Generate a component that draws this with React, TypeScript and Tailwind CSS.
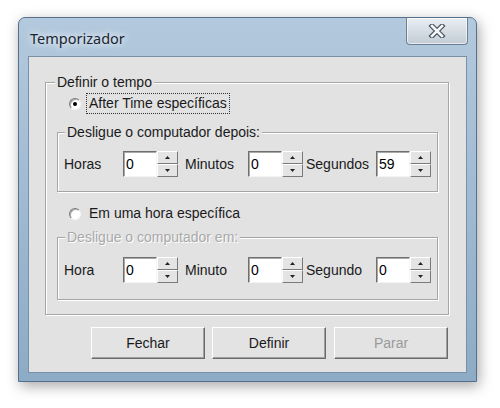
import React from "react";

const font = { fontFamily: '"Liberation Sans", Arial, sans-serif' };

function Spinner({ value }: { value: string }) {
  return (
    <div className="flex h-[26px] w-[55px]">
      <div className="flex h-full w-[34px] items-center border border-t-[#6f6f6f] border-l-[#6f6f6f] border-b-[#f4f4f4] border-r-[#f4f4f4] bg-white pl-[2px] text-[14px] leading-none text-black shadow-[inset_1px_1px_0_#a9a9a9]">
        {value}
      </div>
      <div className="flex h-full w-[21px] flex-col">
        <div className="flex flex-1 items-center justify-center border border-t-white border-l-white border-b-[#7a7a7a] border-r-[#7a7a7a] bg-[#e4e4e4]">
          <svg width="5" height="3" viewBox="0 0 5 3">
            <path d="M2.5 0 L5 3 L0 3 Z" fill="#222" />
          </svg>
        </div>
        <div className="flex flex-1 items-center justify-center border border-t-white border-l-white border-b-[#7a7a7a] border-r-[#7a7a7a] bg-[#e4e4e4]">
          <svg width="5" height="3" viewBox="0 0 5 3">
            <path d="M0 0 L5 0 L2.5 3 Z" fill="#222" />
          </svg>
        </div>
      </div>
    </div>
  );
}

function Radio({ checked }: { checked: boolean }) {
  return (
    <div className="flex h-[12px] w-[12px] items-center justify-center rounded-full border border-t-[#7c7c7c] border-l-[#7c7c7c] border-b-[#f7f7f7] border-r-[#f7f7f7] bg-white shadow-[inset_1px_1px_0_#a8a8a8]">
      {checked && <div className="h-[4px] w-[4px] rounded-full bg-black" />}
    </div>
  );
}

function TimeRow({
  labels,
  values,
}: {
  labels: [string, string, string];
  values: [string, string, string];
}) {
  return (
    <div className="flex h-[26px] items-center pl-[6px] text-[14px] text-[#1a1a1a]">
      <span className="w-[59px]">{labels[0]}</span>
      <Spinner value={values[0]} />
      <span className="ml-[7px] w-[63px]">{labels[1]}</span>
      <Spinner value={values[1]} />
      <span className="ml-[3px] w-[70px]">{labels[2]}</span>
      <Spinner value={values[2]} />
    </div>
  );
}

function Button({ label, disabled }: { label: string; disabled?: boolean }) {
  return (
    <div
      className={`flex h-[32px] w-[114px] items-center justify-center border border-t-white border-l-white border-b-[#6a6a6a] border-r-[#6a6a6a] bg-[#e3e3e3] text-[14px] shadow-[inset_-1px_-1px_0_#a0a0a0] ${
        disabled ? "text-[#9a9a9a]" : "text-[#1a1a1a]"
      }`}
    >
      {label}
    </div>
  );
}

export default function App() {
  return (
    <div className="h-[408px] w-[500px] overflow-hidden bg-white pl-[18px] pt-[17px]" style={font}>
      <div className="flex h-[365px] w-[459px] flex-col rounded-t-[7px] border border-[#55708d] bg-gradient-to-b from-[#b3c9dd] via-[#9fbad2] to-[#8eabc6] shadow-[2px_4px_14px_rgba(0,0,0,0.35)]">
        <div className="flex h-[38px] items-start justify-between">
          <div
            className="pl-[11px] pt-[11px] text-[14.5px] leading-[18px] text-[#1c2530] [text-shadow:0_0_6px_#eaf2fa,0_0_10px_#eaf2fa]"
            style={{ fontFamily: '"Noto Sans", "Open Sans", sans-serif' }}
          >
            Temporizador
          </div>
          <div className="mr-[8px] flex h-[27px] w-[62px] items-center justify-center rounded-b-[4px] border border-t-0 border-[#6b7f95] bg-gradient-to-b from-[#e9eef3] to-[#c3ccd6] shadow-[inset_0_0_0_1px_rgba(255,255,255,0.6)]">
            <svg width="18" height="14" viewBox="0 0 18 14">
              <path d="M4 2 L14 12 M14 2 L4 12" stroke="#4a5563" strokeWidth="5" strokeLinecap="square" />
              <path d="M4 2 L14 12 M14 2 L4 12" stroke="#f4f6f8" strokeWidth="2.6" strokeLinecap="square" />
            </svg>
          </div>
        </div>
        <div className="mx-[9px] h-[317px] border border-[#7890a8] bg-[#e2e2e2]">
          <fieldset className="ml-[16px] mt-[16px] w-[404px] border border-[#a6a6a6] pb-[14px] shadow-[inset_1px_1px_0_#ffffff,1px_1px_0_#ffffff]">
            <legend className="ml-[9px] bg-[#e2e2e2] px-[2px] text-[14px] leading-[18px] text-[#1a1a1a]">
              Definir o tempo
            </legend>
            <div className="mt-[2px] flex h-[21px] items-center pl-[23px]">
              <Radio checked />
              <span className="ml-[5px] flex h-[21px] items-center border border-dotted border-[#333] px-[2px] text-[14px] text-[#1a1a1a]">
                After Time específicas
              </span>
            </div>
            <fieldset className="ml-[11px] mt-[9px] w-[381px] border border-[#a6a6a6] pb-[14px] shadow-[inset_1px_1px_0_#ffffff,1px_1px_0_#ffffff]">
              <legend className="ml-[7px] bg-[#e2e2e2] px-[2px] text-[14px] leading-[18px] text-[#1a1a1a]">
                Desligue o computador depois:
              </legend>
              <div className="mt-[10px]">
                <TimeRow labels={["Horas", "Minutos", "Segundos"]} values={["0", "0", "59"]} />
              </div>
            </fieldset>
            <div className="mt-[11px] flex h-[21px] items-center pl-[23px]">
              <Radio checked={false} />
              <span className="ml-[8px] text-[14px] text-[#1a1a1a]">Em uma hora específica</span>
            </div>
            <fieldset className="ml-[11px] mt-[4px] w-[381px] border border-[#a6a6a6] pb-[16px] shadow-[inset_1px_1px_0_#ffffff,1px_1px_0_#ffffff]">
              <legend className="ml-[7px] bg-[#e2e2e2] px-[2px] text-[14px] leading-[18px] text-[#a9a9a9] [text-shadow:1px_1px_0_#ffffff]">
                Desligue o computador em:
              </legend>
              <div className="mt-[11px]">
                <TimeRow labels={["Hora", "Minuto", "Segundo"]} values={["0", "0", "0"]} />
              </div>
            </fieldset>
          </fieldset>
          <div className="ml-[62px] mt-[12px] flex gap-[7px]">
            <Button label="Fechar" />
            <Button label="Definir" />
            <div className="ml-[1px]">
              <Button label="Parar" disabled />
            </div>
          </div>
        </div>
      </div>
    </div>
  );
}
